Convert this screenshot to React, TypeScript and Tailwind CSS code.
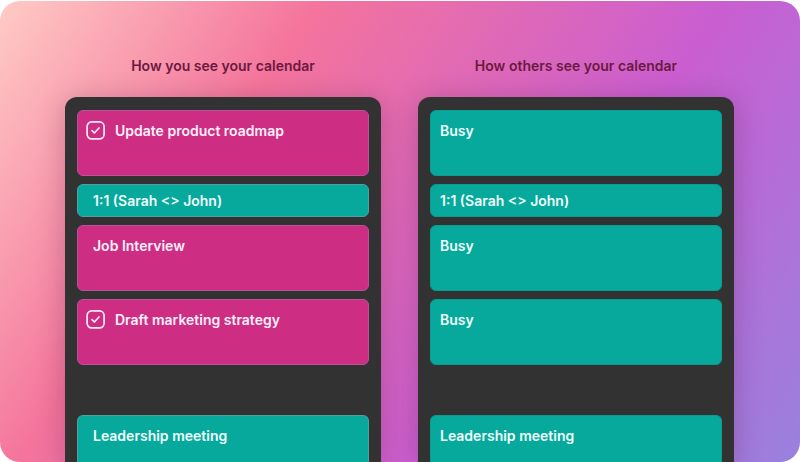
import { useState } from 'react';
import clsx from 'clsx';

interface CalendarItem {
  title: string;
  size: 'tall' | 'short' | 'rest';
  color: 'pink' | 'teal';
  task?: boolean;
  spaced?: boolean;
}

const myItems: CalendarItem[] = [
  { title: 'Update product roadmap', size: 'tall', color: 'pink', task: true },
  { title: '1:1 (Sarah <> John)', size: 'short', color: 'teal' },
  { title: 'Job Interview', size: 'tall', color: 'pink' },
  { title: 'Draft marketing strategy', size: 'tall', color: 'pink', task: true },
  { title: 'Leadership meeting', size: 'rest', color: 'teal', spaced: true },
];

const sharedItems: CalendarItem[] = [
  { title: 'Busy', size: 'tall', color: 'teal' },
  { title: '1:1 (Sarah <> John)', size: 'short', color: 'teal' },
  { title: 'Busy', size: 'tall', color: 'teal' },
  { title: 'Busy', size: 'tall', color: 'teal' },
  { title: 'Leadership meeting', size: 'rest', color: 'teal', spaced: true },
];

function TaskLabel({ title }: { title: string }) {
  const [done, setDone] = useState(true);

  return (
    <label className="flex items-center gap-[9px]">
      <span className="grid h-5 w-5 shrink-0">
        <input
          type="checkbox"
          checked={done}
          onChange={(e) => setDone(e.target.checked)}
          className="col-start-1 row-start-1 h-5 w-5 appearance-none rounded-md"
        />
        <svg
          viewBox="0 0 20 20"
          fill="none"
          stroke="#fdeaf5"
          strokeLinecap="round"
          strokeLinejoin="round"
          className="pointer-events-none col-start-1 row-start-1 h-5 w-5"
          aria-hidden="true"
        >
          <rect x="1.1" y="0.9" width="17" height="17" rx="4.6" strokeWidth="1.7" />
          {done && <path d="M6 9.6 8.4 12 13 7" strokeWidth="1.7" />}
        </svg>
      </span>
      <span>{title}</span>
    </label>
  );
}

function CalendarCard({ item, outlined }: { item: CalendarItem; outlined: boolean }) {
  return (
    <li
      className={clsx(
        'border text-sm font-semibold',
        item.color === 'pink' ? 'bg-[#cd2d83] text-[#fff0f8]' : 'bg-[#06a99b] text-[#f0fffd]',
        outlined
          ? item.color === 'pink' ? 'border-[#b8529a]' : 'border-[#4f9fa3]'
          : 'border-[#089d91]',
        item.size === 'tall' && 'h-[66px] rounded-md pt-[10px]',
        item.size === 'short' && 'flex h-[33px] items-center rounded-md',
        item.size === 'rest' && 'flex-1 rounded-t-md border-b-0 pt-[10px]',
        item.spaced && 'mt-[42px]',
        item.task ? 'px-2' : outlined ? 'px-[15px]' : 'px-[9px]',
      )}
    >
      {item.task ? <TaskLabel title={item.title} /> : item.title}
    </li>
  );
}

function CalendarColumn({ heading, items, outlined = false }: {
  heading: string;
  items: CalendarItem[];
  outlined?: boolean;
}) {
  return (
    <section className="flex flex-col">
      <h2 className="text-center text-sm font-semibold text-[#6b1a3f]">{heading}</h2>
      <ul className="mt-[21px] flex flex-1 flex-col gap-2 rounded-t-xl bg-[#323233] px-3 pt-[13px] shadow-[0_4px_28px_rgba(60,10,50,0.25)]">
        {items.map((item, index) => (
          <CalendarCard key={index} item={item} outlined={outlined} />
        ))}
      </ul>
    </section>
  );
}

export default function App() {
  return (
    <div className="flex min-h-screen flex-col bg-white pt-px font-['Inter',sans-serif]">
      <main className="grid flex-1 grid-cols-2 gap-[37px] overflow-hidden rounded-[20px] bg-[linear-gradient(123deg,#ffcbc5_0%,#f4749c_29%,#ca5ed1_66%,#9981de_100%)] pt-[55px] pr-[66px] pl-[65px]">
        <CalendarColumn heading="How you see your calendar" items={myItems} outlined />
        <CalendarColumn heading="How others see your calendar" items={sharedItems} />
      </main>
    </div>
  );
}
